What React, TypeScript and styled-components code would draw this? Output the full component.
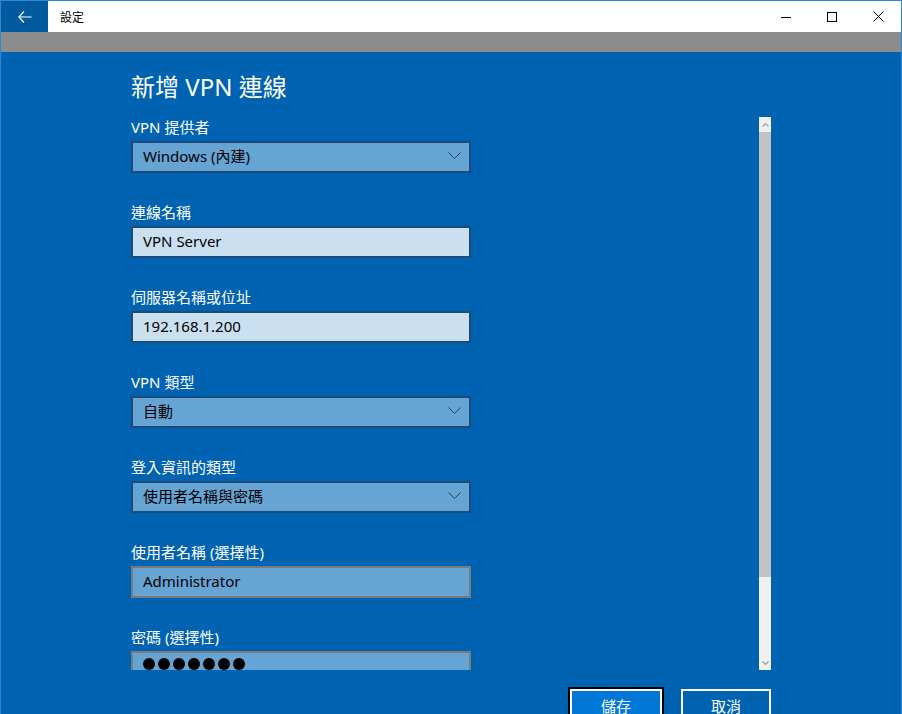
import React from "react";
import styled, { createGlobalStyle } from "styled-components";

const GlobalStyle = createGlobalStyle`
  html, body { margin: 0; padding: 0; overflow: hidden; background: #0063b1; }
  * { box-sizing: border-box; }
  body { font-family: "Segoe UI", "Noto Sans", "Noto Sans CJK TC", sans-serif; }
`;

const Window = styled.div`
  width: 902px;
  height: 714px;
  border: 1px solid #2b88d8;
  border-bottom: none;
  background: #0063b1;
  display: flex;
  flex-direction: column;
  overflow: hidden;
`;

const TitleBar = styled.div`
  height: 31px;
  background: #ffffff;
  display: flex;
  align-items: stretch;
  flex-shrink: 0;
`;

const BackButton = styled.div`
  width: 47px;
  background: #005a9e;
  display: flex;
  align-items: center;
  justify-content: center;
`;

const AppTitle = styled.div`
  margin-left: 12px;
  font-size: 12px;
  color: #000;
  display: flex;
  align-items: center;
  font-family: "Noto Sans CJK TC", sans-serif;
  flex: 1;
`;

const WinButton = styled.div`
  width: 46px;
  display: flex;
  align-items: center;
  justify-content: center;
`;

const GrayBar = styled.div`
  height: 20px;
  background: #8c8c8c;
  flex-shrink: 0;
`;

const Page = styled.div`
  padding: 19px 0 0 130px;
  display: flex;
  flex-direction: column;
`;

const PageTitle = styled.h1`
  margin: 0;
  font-size: 24px;
  line-height: 32px;
  font-weight: 400;
  color: #ffffff;
  font-family: "Segoe UI", "Noto Sans", "Noto Sans CJK TC", sans-serif;
`;

const ScrollArea = styled.div`
  margin-top: 14px;
  width: 640px;
  height: 553px;
  display: flex;
  overflow: hidden;
`;

const Form = styled.div`
  width: 340px;
  display: flex;
  flex-direction: column;
  flex-shrink: 0;
`;

const Field = styled.div`
  display: flex;
  flex-direction: column;
  margin-bottom: 29px;
`;

const Label = styled.label`
  font-size: 15px;
  line-height: 20px;
  color: #ffffff;
  margin-bottom: 4px;
`;

type BoxKind = "select" | "light" | "gray";

const Box = styled.div<{ $kind: BoxKind }>`
  height: 32px;
  border: 2px solid
    ${(p) => (p.$kind === "gray" ? "#7b7b7b" : "#1b4b7b")};
  background: ${(p) => (p.$kind === "light" ? "#cadff0" : "#66a4d4")};
  display: flex;
  align-items: center;
  padding: 0 8px 0 10px;
  font-size: 15px;
  color: #000;
`;

const BoxText = styled.span`
  flex: 1;
  line-height: 20px;
  padding-bottom: 3px;
`;

const Dots = styled.div`
  display: flex;
  gap: 3px;
  margin-top: -6px;
`;

const Dot = styled.span`
  width: 12px;
  height: 12px;
  border-radius: 50%;
  background: #000;
`;

const ScrollBar = styled.div`
  margin-left: auto;
  width: 12px;
  height: 100%;
  background: #f0f0f0;
  display: flex;
  flex-direction: column;
`;

const ScrollArrow = styled.div`
  height: 15px;
  display: flex;
  align-items: center;
  justify-content: center;
`;

const Thumb = styled.div`
  height: 445px;
  background: #c2c2c2;
`;

const Spacer = styled.div`
  flex: 1;
`;

const ButtonRow = styled.div`
  margin-top: 19px;
  width: 640px;
  display: flex;
  justify-content: flex-end;
  gap: 19px;
`;

const Button = styled.button<{ $primary?: boolean }>`
  width: ${(p) => (p.$primary ? 92 : 90)}px;
  height: 32px;
  border: 2px solid #ffffff;
  background: ${(p) => (p.$primary ? "#0078d7" : "transparent")};
  box-shadow: ${(p) => (p.$primary ? "0 0 0 2px #000" : "none")};
  color: #ffffff;
  font-size: 15px;
  font-family: "Noto Sans CJK TC", sans-serif;
  padding: 0;
  display: flex;
  align-items: center;
  justify-content: center;
`;

const Chevron = () => (
  <svg width="13" height="8" viewBox="0 0 13 8" style={{ marginTop: -3 }}>
    <polyline points="0.5,0.5 6.5,6.5 12.5,0.5" fill="none" stroke="#2a3f58" strokeWidth="1" />
  </svg>
);

type FieldDef = { label: string; kind: BoxKind; value?: string; select?: boolean; password?: boolean };

const fields: FieldDef[] = [
  { label: "VPN 提供者", kind: "select", value: "Windows (內建)", select: true },
  { label: "連線名稱", kind: "light", value: "VPN Server" },
  { label: "伺服器名稱或位址", kind: "light", value: "192.168.1.200" },
  { label: "VPN 類型", kind: "select", value: "自動", select: true },
  { label: "登入資訊的類型", kind: "select", value: "使用者名稱與密碼", select: true },
  { label: "使用者名稱 (選擇性)", kind: "gray", value: "Administrator" },
  { label: "密碼 (選擇性)", kind: "gray", password: true },
];

export default function App() {
  return (
    <>
      <GlobalStyle />
      <Window>
        <TitleBar>
          <BackButton>
            <svg width="14" height="12" viewBox="0 0 14 12">
              <path d="M6 0.5 L0.8 6 L6 11.5 M0.8 6 H13.5" fill="none" stroke="#fff" strokeWidth="1.1" />
            </svg>
          </BackButton>
          <AppTitle>設定</AppTitle>
          <WinButton>
            <svg width="10" height="10" viewBox="0 0 10 10">
              <line x1="0" y1="5.5" x2="10" y2="5.5" stroke="#000" strokeWidth="1" />
            </svg>
          </WinButton>
          <WinButton>
            <svg width="10" height="10" viewBox="0 0 10 10">
              <rect x="0.5" y="0.5" width="9" height="9" fill="none" stroke="#000" strokeWidth="1" />
            </svg>
          </WinButton>
          <WinButton>
            <svg width="11" height="11" viewBox="0 0 11 11">
              <path d="M0.5 0.5 L10.5 10.5 M10.5 0.5 L0.5 10.5" stroke="#000" strokeWidth="1" />
            </svg>
          </WinButton>
        </TitleBar>
        <GrayBar />
        <Page>
          <PageTitle>新增 VPN 連線</PageTitle>
          <ScrollArea>
            <Form>
              {fields.map((f) => (
                <Field key={f.label}>
                  <Label>{f.label}</Label>
                  <Box $kind={f.kind}>
                    {f.password ? (
                      <Dots>
                        {Array.from({ length: 7 }).map((_, i) => (
                          <Dot key={i} />
                        ))}
                      </Dots>
                    ) : (
                      <BoxText>{f.value}</BoxText>
                    )}
                    {f.select && <Chevron />}
                  </Box>
                </Field>
              ))}
            </Form>
            <ScrollBar>
              <ScrollArrow>
                <svg width="7" height="4" viewBox="0 0 7 4">
                  <polyline points="0.5,3.5 3.5,0.5 6.5,3.5" fill="none" stroke="#a0a0a0" strokeWidth="1.2" />
                </svg>
              </ScrollArrow>
              <Thumb />
              <Spacer />
              <ScrollArrow>
                <svg width="7" height="4" viewBox="0 0 7 4">
                  <polyline points="0.5,0.5 3.5,3.5 6.5,0.5" fill="none" stroke="#a0a0a0" strokeWidth="1.2" />
                </svg>
              </ScrollArrow>
            </ScrollBar>
          </ScrollArea>
          <ButtonRow>
            <Button $primary>儲存</Button>
            <Button>取消</Button>
          </ButtonRow>
        </Page>
      </Window>
    </>
  );
}
